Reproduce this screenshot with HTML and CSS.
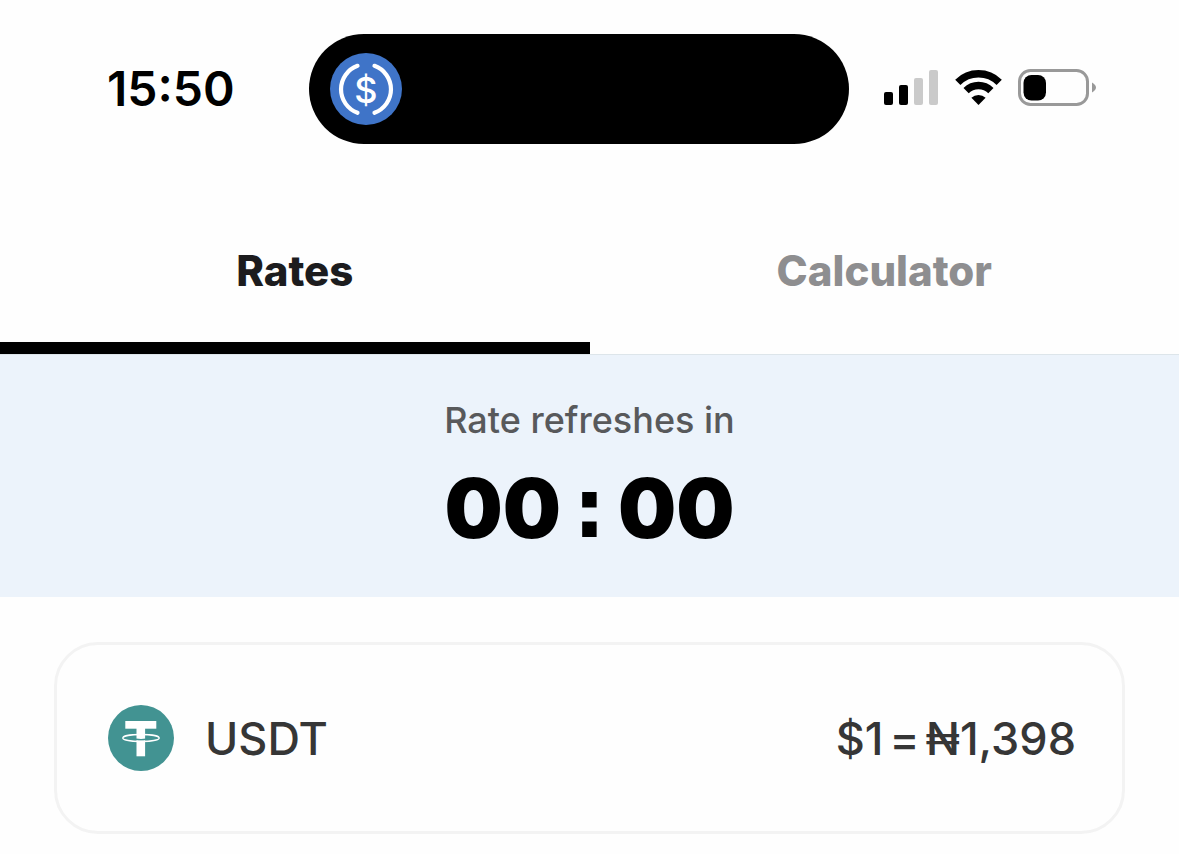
FILE: index.html
```html
<!DOCTYPE html>
<html lang="en">
<head>
    <meta charset="UTF-8">
    <meta name="viewport" content="width=device-width, initial-scale=1.0">
    <title>Rates</title>
    <link rel="stylesheet" href="styles.css">
</head>
<body>
    <header class="status-bar">
        <time class="clock">15:50</time>
        <div class="island">
            <svg class="usdc-icon" viewBox="0 0 72 72" role="img" aria-label="USDC">
                <circle cx="36" cy="36" r="36" fill="#3f74c8"/>
                <path d="M27.5 12.8A25 25 0 0 0 27.5 59.8M44.5 12.8A25 25 0 0 1 44.5 59.8" fill="none" stroke="#fff" stroke-width="4.2" stroke-linecap="round"/>
                <text class="usdc-sign" x="36" y="49.5" text-anchor="middle">$</text>
            </svg>
        </div>
        <div class="indicators">
            <svg width="55" height="38" viewBox="0 0 55 38" role="img" aria-label="Signal">
                <rect x="0" y="22" width="9" height="13" rx="2"/>
                <rect x="15" y="15" width="9" height="20" rx="2"/>
                <rect x="30" y="8" width="9" height="27" rx="2" fill="#cacaca"/>
                <rect x="45" y="0" width="9" height="35" rx="2" fill="#cacaca"/>
            </svg>
            <svg width="47" height="38" viewBox="0 0 47 38" role="img" aria-label="Wi-Fi">
                <path d="M2.8 12.3A29.3 29.3 0 0 1 44.2 12.3M11.1 20.6A17.6 17.6 0 0 1 35.9 20.6" fill="none" stroke="#000" stroke-width="7.4"/>
                <path d="M23.5 35L16.4 27.8A10.2 10.2 0 0 1 30.6 27.8Z"/>
            </svg>
            <svg width="78" height="40" viewBox="0 0 78 40" role="img" aria-label="Battery">
                <rect x="1.5" y="1.5" width="68" height="34" rx="11" fill="none" stroke="#999" stroke-width="3"/>
                <rect x="5.5" y="6" width="22.5" height="25.5" rx="8"/>
                <path d="M74 13.5Q78 16 78 18.5Q78 21 74 23.5Z" fill="#999"/>
            </svg>
        </div>
    </header>

    <nav class="tabs" role="tablist">
        <button class="tab active" role="tab" aria-selected="true">Rates</button>
        <button class="tab" role="tab" aria-selected="false">Calculator</button>
    </nav>

    <section class="refresh">
        <p class="refresh-label">Rate refreshes in</p>
        <div class="countdown">
            <span>00</span>
            <span class="colon">:</span>
            <span>00</span>
        </div>
    </section>

    <main class="rates">
        <div class="rate-card">
            <svg class="usdt-icon" viewBox="0 0 66 66" aria-hidden="true">
                <circle cx="33" cy="33" r="33" fill="#429392"/>
                <rect x="17.3" y="16" width="31" height="7.7" fill="#fff"/>
                <rect x="28.5" y="23" width="8.6" height="28.3" fill="#fff"/>
                <path d="M28 34.3Q33 35.3 38 34.3" fill="none" stroke="#429392" stroke-width="1.4"/>
                <ellipse cx="33" cy="33" rx="18.2" ry="3.5" fill="none" stroke="#fff" stroke-width="1.3"/>
            </svg>
            <span class="coin">USDT</span>
            <div class="price">
                <span>$1</span>
                <span>=</span>
                <span>₦1,398</span>
            </div>
        </div>
    </main>
</body>
</html>
```
FILE: styles.css
```css
* {
    box-sizing: border-box;
}
body {
    margin: 0;
    background: #fefefe;
    color: #000;
    font-family: Inter, "Liberation Sans", sans-serif;
}

/* status bar */
.status-bar {
    display: flex;
    align-items: center;
    padding: 34px 83px 0 107px;
}
.clock {
    width: 127px;
    font-size: 48px;
    font-weight: 600;
    line-height: 56px;
}
.island {
    flex: 1;
    display: flex;
    align-items: center;
    height: 110px;
    margin: 0 35px 0 75px;
    padding-left: 21px;
    background: #000;
    border-radius: 55px;
}
.usdc-icon {
    width: 72px;
    height: 72px;
}
.usdc-sign {
    fill: #fff;
    font-size: 36px;
    font-weight: 500;
}
.indicators {
    display: flex;
    align-items: center;
    gap: 16px;
}

/* tabs */
.tabs {
    display: flex;
    margin-top: 56px;
}
.tab {
    flex: 1;
    padding: 45px 0;
    border: none;
    border-bottom: 12px solid transparent;
    background: none;
    color: #8e8e90;
    font-family: inherit;
    font-size: 42px;
    font-weight: 800;
    line-height: 52px;
    cursor: pointer;
}
.tab.active {
    border-bottom-color: #000;
    color: #1c1c1e;
}

/* countdown */
.refresh {
    padding: 40px 0 38px;
    border-top: 1px solid #dde5ea;
    background: #ecf3fb;
    text-align: center;
}
.refresh-label {
    margin: 0;
    color: #58595b;
    font-size: 36px;
    font-weight: 500;
    line-height: 50px;
}
.countdown {
    display: flex;
    justify-content: center;
    gap: 12px;
    margin-top: 14px;
    font-size: 82px;
    font-weight: 900;
    line-height: 100px;
}
.colon {
    font-family: "DejaVu Sans", sans-serif;
}

/* rates */
.rates {
    padding: 45px 54px 20px;
}
.rate-card {
    display: flex;
    align-items: center;
    padding: 60px 46px 60px 51px;
    border: 3px solid #f3f3f3;
    border-radius: 44px;
    color: #363636;
    font-size: 45px;
    font-weight: 500;
    line-height: 65px;
}
.usdt-icon {
    width: 66px;
    height: 66px;
    margin-right: 31px;
}
.price {
    display: flex;
    gap: 6px;
    margin-left: auto;
}
```
